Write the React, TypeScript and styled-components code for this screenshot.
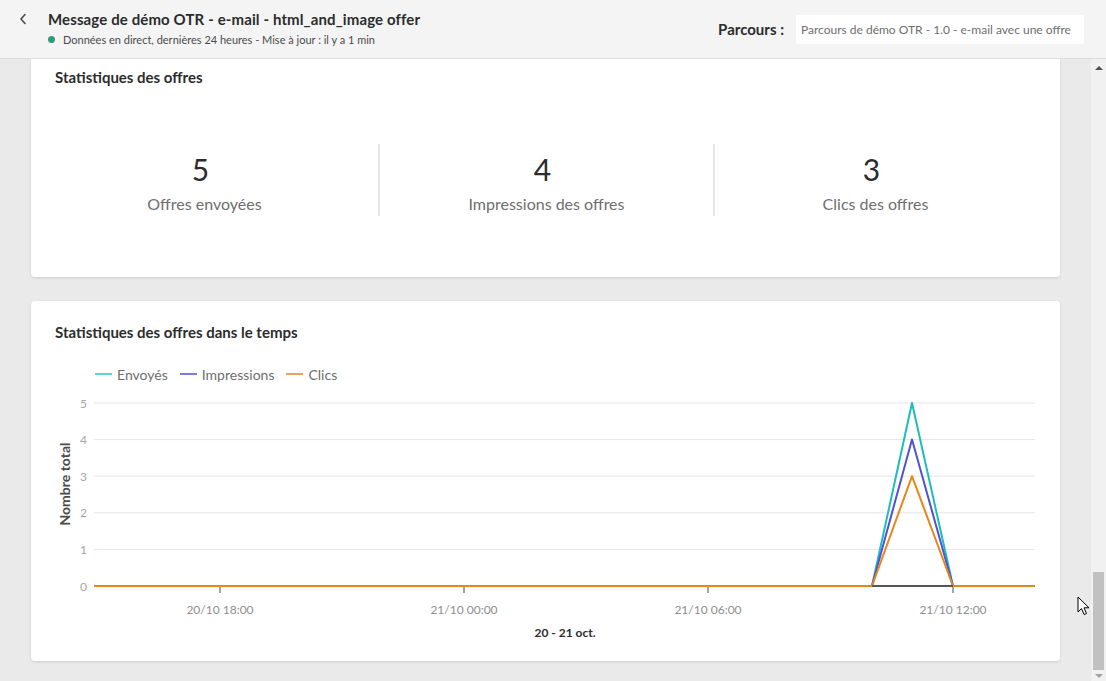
import React from "react";
import styled, { createGlobalStyle } from "styled-components";

const Global = createGlobalStyle`
  html, body { margin: 0; padding: 0; }
  body {
    width: 1106px; height: 681px; overflow: hidden;
    font-family: Lato, "Open Sans", sans-serif;
    background: #eaeaea;
    color: #2c2c2c;
  }
`;

const Page = styled.div`
  width: 1106px; height: 681px;
  display: flex; flex-direction: column;
  position: relative;
`;

const Header = styled.header`
  height: 58px;
  flex: none;
  background: #f4f4f4;
  border-bottom: 1px solid #dcdcdc;
  display: flex; align-items: center;
  padding: 0 22px 0 16px;
`;

const BackButton = styled.div`
  width: 14px; height: 14px;
  margin-top: -20px;
  margin-right: 18px;
  display: flex; align-items: center; justify-content: center;
  color: #4b4b4b;
`;

const TitleBlock = styled.div`
  display: flex; flex-direction: column;
  flex: 1;
`;

const Title = styled.h1`
  margin: 0;
  font-size: 15px; font-weight: 700;
  line-height: 20px;
  letter-spacing: 0.12px;
  color: #2c2c2c;
  margin-top: -3px;
`;

const Sub = styled.div`
  display: flex; align-items: center;
  font-size: 11px; color: #4b4b4b;
  line-height: 14px;
  margin-top: 4px;
`;

const Dot = styled.span`
  width: 7px; height: 7px; border-radius: 50%;
  background: #2d9d78;
  margin: 0 8px 0 0;
`;

const Label = styled.span`
  font-size: 15px; font-weight: 700; color: #2c2c2c;
  margin-right: 12px;
`;

const Field = styled.div`
  width: 288px; height: 29px;
  background: #fff;
  box-sizing: border-box;
  padding: 0 5px;
  display: flex; align-items: center;
  font-size: 12px; color: #6e6e6e;
  white-space: nowrap; overflow: hidden;
`;

const Body = styled.div`
  flex: 1; display: flex; min-height: 0;
`;

const Content = styled.main`
  flex: 1;
  display: flex; flex-direction: column; gap: 24px;
  padding: 0 31px;
  overflow: hidden;
`;

const Card = styled.section<{ $h: number; $top?: boolean }>`
  background: #fff;
  height: ${p => p.$h}px;
  flex: none;
  box-sizing: border-box;
  border-radius: ${p => (p.$top ? "0 0 4px 4px" : "4px")};
  box-shadow: 0 1px 3px rgba(0,0,0,0.12);
  padding-top: ${p => (p.$top ? 9 : 22)}px;
  display: flex; flex-direction: column;
`;

const CardTitle = styled.h2`
  margin: 0 0 0 24px;
  font-size: 15px; font-weight: 700;
  line-height: 18px; color: #2c2c2c;
`;

const Stats = styled.div`
  display: grid;
  grid-template-columns: 347px 335px 1fr;
  margin: 58px 24px 0 0;
`;

const Stat = styled.div<{ $divider?: boolean }>`
  height: 72px;
  box-sizing: border-box;
  padding-top: 8px;
  display: flex; flex-direction: column; align-items: center;
  border-left: ${p => (p.$divider ? "2px solid #e6e6e6" : "none")};
`;

const StatValue = styled.div`
  font-size: 30px; line-height: 34px; font-weight: 400; color: #2c2c2c;
  margin-right: 8px;
`;

const StatLabel = styled.div`
  margin-top: 8px;
  font-size: 16px; line-height: 20px; color: #6e6e6e;
`;

const Legend = styled.div`
  display: flex; gap: 12px;
  margin: 24px 0 0 64px;
  height: 18px; align-items: center;
`;

const LegendItem = styled.div<{ $c: string }>`
  display: flex; align-items: center; gap: 5px;
  font-size: 14px; color: #6e6e6e;
  &::before {
    content: ""; width: 17px; height: 2px; background: ${p => p.$c};
  }
`;

const Chart = styled.svg`
  display: block;
  margin-top: 7px;
  font-family: Lato, "Open Sans", sans-serif;
`;

const Scrollbar = styled.div`
  width: 15px; flex: none;
  background: #f1f1f1;
  display: flex; flex-direction: column; align-items: center;
  padding: 7px 0 3px;
  box-sizing: border-box;
`;

const Arrow = styled.div<{ $up?: boolean }>`
  width: 0; height: 0;
  border-left: 4px solid transparent;
  border-right: 4px solid transparent;
  ${p => (p.$up ? "border-bottom: 4px solid #505050;" : "border-top: 4px solid #a3a3a3;")}
`;

const Track = styled.div`
  flex: 1; width: 100%;
  display: flex; flex-direction: column; justify-content: flex-end;
  align-items: center;
  padding-bottom: 4px;
`;

const Thumb = styled.div`
  width: 11px; height: 98px; background: #c1c1c1;
`;

const Cursor = styled.svg`
  position: absolute; left: 1077px; top: 596px;
`;

const COLORS = { teal: "#1fbcbc", purple: "#5151d3", orange: "#e8861a" };

const gy = (v: number) => 196 - v * 36.6;
const X0 = 63, X1 = 1004;

function series(peak: number) {
  return `${X0},${gy(0)} 841,${gy(0)} 881,${gy(peak)} 922,${gy(0)} ${X1},${gy(0)}`;
}

export default function App() {
  const ticks = [
    { x: 189, t: "20/10 18:00" },
    { x: 433, t: "21/10 00:00" },
    { x: 677, t: "21/10 06:00" },
    { x: 922, t: "21/10 12:00" },
  ];
  return (
    <>
      <Global />
      <Page>
        <Header>
          <BackButton>
            <svg width="8" height="12" viewBox="0 0 8 12">
              <path d="M6 1.5 L2 6 L6 10.5" fill="none" stroke="#4b4b4b" strokeWidth="1.6" strokeLinecap="round" strokeLinejoin="round" />
            </svg>
          </BackButton>
          <TitleBlock>
            <Title>Message de démo OTR - e-mail - html_and_image offer</Title>
            <Sub><Dot />Données en direct, dernières 24 heures - Mise à jour : il y a 1 min</Sub>
          </TitleBlock>
          <Label>Parcours :</Label>
          <Field>Parcours de démo OTR - 1.0 - e-mail avec une offre</Field>
        </Header>
        <Body>
          <Content>
            <Card $h={218} $top>
              <CardTitle>Statistiques des offres</CardTitle>
              <Stats>
                <Stat><StatValue>5</StatValue><StatLabel>Offres envoyées</StatLabel></Stat>
                <Stat $divider><StatValue>4</StatValue><StatLabel>Impressions des offres</StatLabel></Stat>
                <Stat $divider><StatValue>3</StatValue><StatLabel>Clics des offres</StatLabel></Stat>
              </Stats>
            </Card>
            <Card $h={360}>
              <CardTitle>Statistiques des offres dans le temps</CardTitle>
              <Legend>
                <LegendItem $c="#5ed3d3">Envoyés</LegendItem>
                <LegendItem $c="#7b7be6">Impressions</LegendItem>
                <LegendItem $c="#f0a24f">Clics</LegendItem>
              </Legend>
              <Chart width={1029} height={260} viewBox="0 0 1029 260">
                {[0, 1, 2, 3, 4, 5].map(v => (
                  <g key={v}>
                    {v > 0 && <line x1={X0} x2={X1} y1={gy(v)} y2={gy(v)} stroke="#e6e6e6" strokeWidth="1" />}
                    <text x={56} y={gy(v)} textAnchor="end" dominantBaseline="central" fontSize="12" fill="#a6a6a6">{v}</text>
                  </g>
                ))}
                <text transform="translate(33 94) rotate(-90)" textAnchor="middle" dominantBaseline="central" fontSize="14" fontWeight="700" fill="#4b4b4b">Nombre total</text>
                <line x1={X0} x2={X1} y1={196} y2={196} stroke="#4b4b4b" strokeWidth="1.5" />
                {ticks.map(t => (
                  <g key={t.t}>
                    <line x1={t.x} x2={t.x} y1={196} y2={203} stroke="#4b4b4b" strokeWidth="1" />
                    <text x={t.x} y={219} textAnchor="middle" dominantBaseline="central" fontSize="12" fill="#8e8e8e">{t.t}</text>
                  </g>
                ))}
                <text x={534} y={242} textAnchor="middle" dominantBaseline="central" fontSize="12" fontWeight="700" fill="#2c2c2c">20 - 21 oct.</text>
                <polyline points={series(5)} fill="none" stroke={COLORS.teal} strokeWidth="2" strokeLinejoin="round" />
                <polyline points={series(4)} fill="none" stroke={COLORS.purple} strokeWidth="2" strokeLinejoin="round" />
                <polyline points={series(3)} fill="none" stroke={COLORS.orange} strokeWidth="2" strokeLinejoin="round" />
                <line x1={841} x2={922} y1={196} y2={196} stroke="#4b4b4b" strokeWidth="1.5" />
              </Chart>
            </Card>
          </Content>
          <Scrollbar>
            <Arrow $up />
            <Track><Thumb /></Track>
            <Arrow />
          </Scrollbar>
        </Body>
        <Cursor width="13" height="20" viewBox="0 0 13 20">
          <path d="M1 1 L1 16 L4.5 12.5 L7 18.5 L9.5 17.5 L7 11.8 L12 11.8 Z" fill="#fff" stroke="#000" strokeWidth="1" strokeLinejoin="round" />
        </Cursor>
      </Page>
    </>
  );
}
